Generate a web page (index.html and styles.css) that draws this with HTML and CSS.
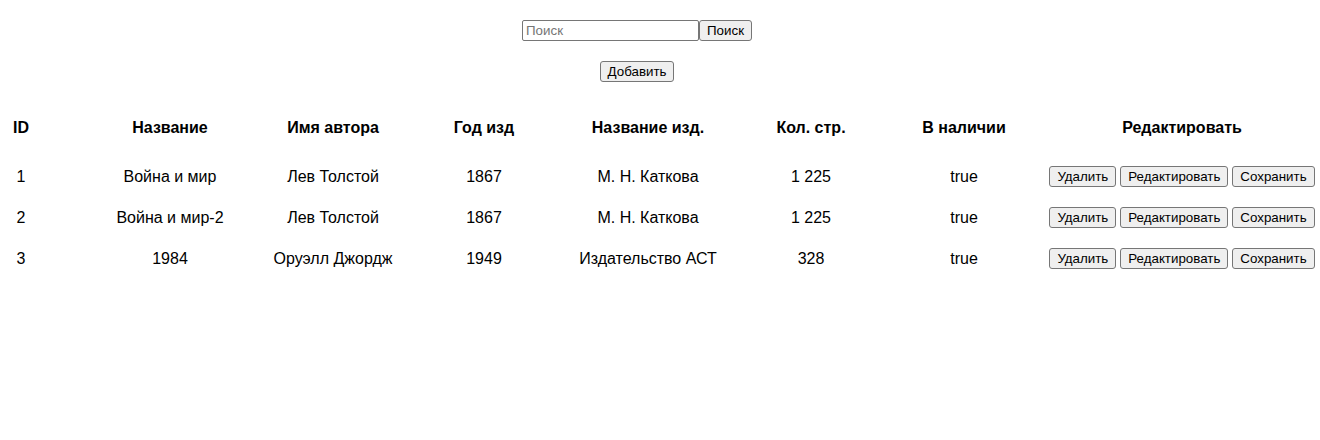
FILE: index.html
```html
<!DOCTYPE html>
<html lang="ru">
<head>
<meta charset="utf-8">
<title>Книги</title>
<link rel="stylesheet" href="styles.css">
</head>
<body>
<div class="toolbar">
  <form class="search">
    <input class="search-input" type="text" placeholder="Поиск"><button class="btn" type="button">Поиск</button>
  </form>
  <div class="add-row"><button class="btn" type="button">Добавить</button></div>
</div>
<table class="books">
  <colgroup>
    <col class="c-id"><col class="c-name"><col class="c-author"><col class="c-year"><col class="c-pub"><col class="c-pages"><col class="c-stock"><col class="c-edit">
  </colgroup>
  <thead>
    <tr><th>ID</th><th>Название</th><th>Имя автора</th><th>Год изд</th><th>Название изд.</th><th>Кол. стр.</th><th>В наличии</th><th>Редактировать</th></tr>
  </thead>
  <tbody>
    <tr><td>1</td><td>Война и мир</td><td>Лев Толстой</td><td>1867</td><td>М. Н. Каткова</td><td>1 225</td><td>true</td><td><div class="actions"><button class="btn" type="button">Удалить</button><button class="btn" type="button">Редактировать</button><button class="btn" type="button">Сохранить</button></div></td></tr>
    <tr><td>2</td><td>Война и мир-2</td><td>Лев Толстой</td><td>1867</td><td>М. Н. Каткова</td><td>1 225</td><td>true</td><td><div class="actions"><button class="btn" type="button">Удалить</button><button class="btn" type="button">Редактировать</button><button class="btn" type="button">Сохранить</button></div></td></tr>
    <tr><td>3</td><td>1984</td><td>Оруэлл Джордж</td><td>1949</td><td>Издательство АСТ</td><td>328</td><td>true</td><td><div class="actions"><button class="btn" type="button">Удалить</button><button class="btn" type="button">Редактировать</button><button class="btn" type="button">Сохранить</button></div></td></tr>
  </tbody>
</table>
</body>
</html>
```
FILE: styles.css
```css
html, body {
  margin: 0;
  padding: 0;
  background: #ffffff;
}
body {
  font-family: "Liberation Sans", Arial, sans-serif;
  font-size: 16px;
  color: #000000;
}
.toolbar {
  width: 1274px;
  text-align: center;
  padding-top: 20px;
}
.search {
  margin: 0;
  display: flex;
  justify-content: center;
}
.search-input {
  box-sizing: border-box;
  width: 177px;
  height: 21px;
  margin: 0;
  padding: 1px 3px;
  border: 1px solid #767676;
  border-radius: 2px;
  font-family: "Liberation Sans", Arial, sans-serif;
  font-size: 13.333px;
  color: #000;
}
.search-input::placeholder {
  color: #757575;
}
.btn {
  box-sizing: border-box;
  height: 21px;
  margin: 0;
  padding: 1px 7px;
  background: #efefef;
  border: 1px solid #767676;
  border-radius: 3px;
  font-family: "Liberation Sans", Arial, sans-serif;
  font-size: 13.333px;
  line-height: 15px;
  color: #000;
}
.add-row {
  margin-top: 20px;
  display: flex;
  justify-content: center;
}
.books {
  margin-top: 27px;
  width: 1320px;
  table-layout: fixed;
  border-collapse: collapse;
}
.c-id { width: 42px; }
.c-name { width: 228px; }
.c-author { width: 126px; }
.c-year { width: 176px; }
.c-pub { width: 152px; }
.c-pages { width: 174px; }
.c-stock { width: 132px; }
.c-edit { width: 290px; }
.books th, .books td {
  padding: 10px 0;
  text-align: center;
  white-space: nowrap;
  line-height: 18px;
}
.books th {
  font-weight: bold;
  padding-bottom: 19px;
}
.books td {
  padding: 10px 0;
  height: 21px;
}
.books th:nth-child(2), .books td:nth-child(2) {
  padding-left: 28px;
}
.books th:nth-child(8), .books td:nth-child(8) {
  padding-left: 14px;
}
.actions {
  display: flex;
  justify-content: center;
  gap: 4px;
}
```
